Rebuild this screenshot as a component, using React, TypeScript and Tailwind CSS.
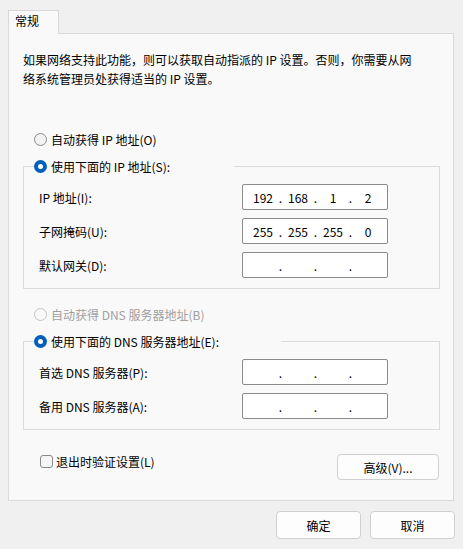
import type { ReactNode } from "react";

const font = "font-['Microsoft_YaHei_UI','Noto_Sans_CJK_SC',sans-serif]";

function Radio({ checked, disabled }: { checked?: boolean; disabled?: boolean }) {
    if (checked) {
        return (
            <span className="flex items-center justify-center w-[13px] h-[13px] rounded-full bg-[#005fb8] shrink-0">
                <span className="w-[5px] h-[5px] rounded-full bg-white" />
            </span>
        );
    }
    return (
        <span
            className={`w-[13px] h-[13px] rounded-full border shrink-0 ${
                disabled ? "border-[#c4c4c4] bg-[#f9f9f9]" : "border-[#8a8a8a] bg-[#f3f3f3]"
            }`}
        />
    );
}

function IpBox({ parts }: { parts: string[] }) {
    return (
        <div className="flex items-center w-[146px] h-[26px] pl-[5px] rounded-[2px] border border-[#8b8b8b] bg-white text-[12px] text-black">
            {parts.map((p, i) => (
                <div key={i} className="flex items-center">
                    <span className="w-[30px] text-center">{p}</span>
                    {i < 3 && <span className="w-[5px] text-center">.</span>}
                </div>
            ))}
        </div>
    );
}

function Row({ label, parts }: { label: string; parts: string[] }) {
    return (
        <div className="flex items-center h-[26px]">
            <span className="w-[218px] pl-[15px]">{label}</span>
            <IpBox parts={parts} />
        </div>
    );
}

function Group({ legend, width, children }: { legend: ReactNode; width: string; children: ReactNode }) {
    return (
        <fieldset className="ml-[14px] mr-[13px] border border-[#dcdcdc] px-[10px] pb-[10px]">
            <legend className={`${width} bg-[#f9f9f9]`}>{legend}</legend>
            <div className="flex flex-col gap-[8px] mt-[8px] -ml-[10px]">{children}</div>
        </fieldset>
    );
}

const empty = ["", "", "", ""];

export default function App() {
    return (
        <div className={`w-[463px] h-[549px] bg-[#f0f0f0] pt-[10px] text-[12px] leading-[19px] text-black ${font}`}>
            {/* Tab */}
            <div className="ml-[8px] relative z-10 -mb-px w-[51px] h-[24px] border border-b-0 border-[#d9d9d9] bg-[#f9f9f9] pl-[6px]">
                常规
            </div>

            {/* Panel */}
            <div className="mx-[8px] w-[446px] h-[468px] border border-[#d9d9d9] bg-[#f9f9f9] pt-[16px]">
                <p className="px-[14px]">
                    如果网络支持此功能，则可以获取自动指派的 IP 设置。否则，你需要从网
                    <br />
                    络系统管理员处获得适当的 IP 设置。
                </p>

                <div className="flex items-center gap-[4px] ml-[25px] mt-[42px]">
                    <Radio />
                    <span>自动获得 IP 地址(O)</span>
                </div>

                <div className="mt-[8px]">
                    <Group
                        width="w-[200px]"
                        legend={
                            <span className="flex items-center gap-[4px]">
                                <Radio checked />
                                <span>使用下面的 IP 地址(S):</span>
                            </span>
                        }
                    >
                        <Row label="IP 地址(I):" parts={["192", "168", "1", "2"]} />
                        <Row label="子网掩码(U):" parts={["255", "255", "255", "0"]} />
                        <Row label="默认网关(D):" parts={empty} />
                    </Group>
                </div>

                <div className="flex items-center gap-[4px] ml-[25px] mt-[16px] text-[#a0a0a0]">
                    <Radio disabled />
                    <span>自动获得 DNS 服务器地址(B)</span>
                </div>

                <div className="mt-[8px]">
                    <Group
                        width="w-[247px]"
                        legend={
                            <span className="flex items-center gap-[4px]">
                                <Radio checked />
                                <span>使用下面的 DNS 服务器地址(E):</span>
                            </span>
                        }
                    >
                        <Row label="首选 DNS 服务器(P):" parts={empty} />
                        <Row label="备用 DNS 服务器(A):" parts={empty} />
                    </Group>
                </div>

                <div className="flex items-start justify-between mt-[22px] ml-[31px] mr-[14px]">
                    <label className="flex items-center gap-[3px]">
                        <span className="w-[13px] h-[13px] rounded-[3px] border border-[#8a8a8a] bg-[#f5f5f5]" />
                        <span>退出时验证设置(L)</span>
                    </label>
                    <button className="mt-[2px] w-[102px] h-[26px] rounded-[4px] border border-[#d0d0d0] bg-[#fdfdfd]">
                        高级(V)...
                    </button>
                </div>
            </div>

            {/* Footer */}
            <div className="flex justify-end gap-[9px] mt-[10px] mr-[8px]">
                <button className="w-[85px] h-[28px] rounded-[4px] border border-[#d0d0d0] bg-[#fdfdfd]">确定</button>
                <button className="w-[85px] h-[28px] rounded-[4px] border border-[#d0d0d0] bg-[#fdfdfd]">取消</button>
            </div>
        </div>
    );
}
